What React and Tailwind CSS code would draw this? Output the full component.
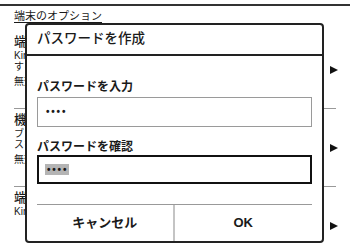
import React from "react";

const Arrow = () => (
  <svg width="8" height="10" viewBox="0 0 8 10" className="mr-[-2px] shrink-0">
    <polygon points="0,1 8,5 0,9" fill="#111" />
  </svg>
);

const Item = ({ title, lines, status }) => {
  return (
    <div className="flex h-[78px] items-center border-b border-[#999]">
      <div className="flex-1 self-start overflow-hidden pt-[3px]">
        <div className="text-[13px] leading-[16px] font-medium whitespace-nowrap">{title}</div>
        {lines.map((l, i) => (
          <div key={i} className="text-[10px] leading-[11px] whitespace-nowrap text-[#1a1a1a]">
            {l}
          </div>
        ))}
        {status && <div className="mt-[4px] text-[10px] leading-[11px]">{status}</div>}
      </div>
      <Arrow />
    </div>
  );
};

const App = () => {
  return (
    <div
      className="relative w-[350px] h-[252px] overflow-hidden bg-white text-[#1a1a1a]"
      style={{ fontFamily: "'Liberation Sans', 'Noto Sans CJK JP', sans-serif" }}
    >
      <div className="mt-[4px] h-[2px] bg-[#333]" />
      <div className="px-[14px]">
        <div className="mt-[3px] mb-[8px] text-[11px] leading-[14px] underline underline-offset-[2px]">
          端末のオプション
        </div>
        <Item title="端末のパスコード" lines={["Kindleにパスコード", "することができます。"]} status="無効" />
        <Item title="機能制限" lines={["ブラウザ、ストア", "スを制限します。"]} status="無効" />
        <Item title="端末名" lines={["Kindleの名前"]} />
      </div>

      {/* dialog */}
      <div className="absolute left-[25px] top-[23px] flex h-[220px] w-[299px] flex-col rounded-[4px] border-2 border-[#222] bg-white">
        <div className="flex h-[31px] shrink-0 items-center border-b-2 border-[#222] px-[10px] text-[13.5px] font-medium">
          パスワードを作成
        </div>
        <div className="flex flex-col px-[10px] pt-[23px]">
          <div className="text-[12px] leading-[16px] font-bold">パスワードを入力</div>
          <div className="mt-[2px] flex h-[30px] items-center border border-[#9a9a9a] pl-[8px]">
            <span className="text-[10px] leading-[10px] font-bold tracking-[1.8px]">••••</span>
          </div>
          <div className="mt-[12px] text-[12px] leading-[16px] font-bold">パスワードを確認</div>
          <div className="flex h-[29px] items-center border-2 border-[#111] pl-[6px]">
            <span className="flex h-[11px] items-center bg-[#b4b4b4] pl-[2px] pr-[1px] text-[10px] leading-[10px] font-bold tracking-[1.8px]">
              ••••
            </span>
          </div>
        </div>
        <div className="flex-1" />
        <div className="mx-[10px] grid h-[37px] grid-cols-2 border-t border-[#999]">
          <div className="flex items-center justify-center border-r-2 border-[#c4c4c4] text-[13px] font-bold">
            キャンセル
          </div>
          <div className="flex items-center justify-center text-[13px] font-bold">OK</div>
        </div>
      </div>
    </div>
  );
};

export default App;
